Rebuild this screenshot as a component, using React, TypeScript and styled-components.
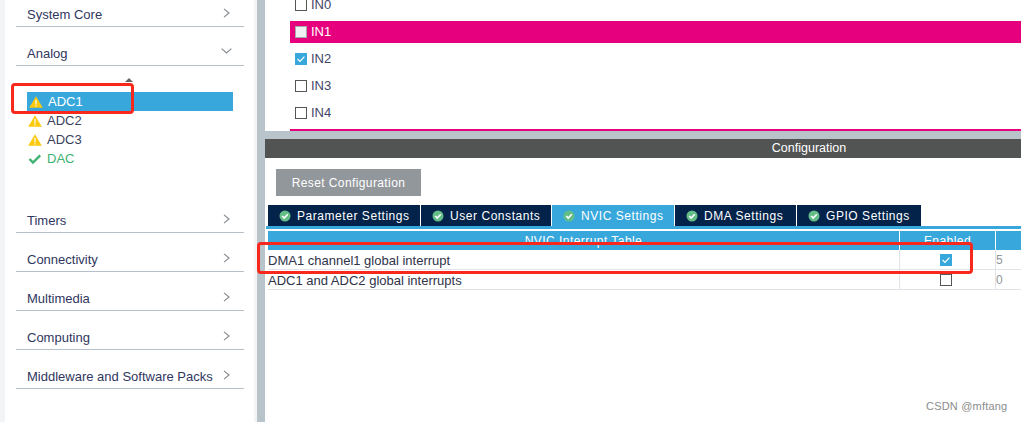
import React from "react";
import styled, { createGlobalStyle } from "styled-components";

const Global = createGlobalStyle`
  html, body { margin: 0; padding: 0; background: #fff; }
  body { font-family: "Liberation Sans", Arial, sans-serif; }
`;

const Page = styled.div`
  position: relative;
  width: 1021px;
  height: 422px;
  overflow: hidden;
  display: flex;
  background: #fff;
`;

const Sidebar = styled.aside`
  box-sizing: border-box;
  width: 257px;
  height: 422px;
  flex: none;
  background: #fff;
  border-left: 5px solid #f2f4f5;
  border-right: 3px solid #f2f4f5;
  padding: 0 10px 0 11px;
`;

const Category = styled.div<{ $h?: number }>`
  box-sizing: border-box;
  height: ${(p) => p.$h ?? 39}px;
  border-bottom: 1px solid #b5c0c8;
  display: flex;
  align-items: flex-end;
  justify-content: space-between;
  padding: 0 14px 3px 11px;
  font-size: 13px;
  line-height: 16px;
  color: #2f3660;
`;

const Chevron = styled.svg<{ $lift: number; $pull?: number }>`
  flex: none;
  margin-bottom: ${(p) => p.$lift}px;
  margin-right: ${(p) => p.$pull ?? 0}px;
  fill: none;
  stroke: #85898d;
  stroke-width: 1.1;
`;

const PeripheralList = styled.div`
  height: 128px;
  box-sizing: border-box;
  padding-top: 12px;
  display: flex;
  flex-direction: column;
`;

const ScrollCaret = styled.div`
  width: 0;
  height: 0;
  margin: 0 0 10px 109px;
  border-left: 4px solid transparent;
  border-right: 4px solid transparent;
  border-bottom: 4px solid #666;
`;

const Peripheral = styled.div<{ $active?: boolean; $ok?: boolean }>`
  box-sizing: border-box;
  width: 206px;
  height: 19px;
  margin-left: 11px;
  display: flex;
  align-items: center;
  gap: 5px;
  padding-left: ${(p) => (p.$active ? 2 : 1)}px;
  font-size: 13px;
  background: ${(p) => (p.$active ? "#38a8dc" : "transparent")};
  color: ${(p) => (p.$active ? "#fff" : p.$ok ? "#3eb273" : "#3a3f5c")};
`;

const Divider = styled.div`
  width: 8px;
  flex: none;
  background: #b9c4ca;
`;

const Main = styled.main`
  flex: 1;
  min-width: 0;
  display: flex;
  flex-direction: column;
`;

const ChannelPane = styled.section`
  box-sizing: border-box;
  height: 131px;
  margin-left: 25px;
  overflow: hidden;
  display: flex;
  flex-direction: column;
  justify-content: flex-end;
  padding-bottom: 3px;
  border-bottom: 2px solid #e6007e;
`;

const ChannelRow = styled.div<{ $active?: boolean }>`
  box-sizing: border-box;
  flex: none;
  height: ${(p) => (p.$active ? 22 : 27)}px;
  margin: ${(p) => (p.$active ? "3px 0 2px" : "0")};
  display: flex;
  align-items: center;
  gap: 4px;
  padding-left: 5px;
  padding-bottom: ${(p) => (p.$active ? 1 : 0)}px;
  font-size: 13px;
  background: ${(p) => (p.$active ? "#e6007e" : "transparent")};
  color: ${(p) => (p.$active ? "#fff" : "#3f4566")};
`;

const Box = styled.span<{ $state?: "off" | "on" | "muted" }>`
  box-sizing: border-box;
  width: 12px;
  height: 12px;
  flex: none;
  display: inline-flex;
  align-items: center;
  justify-content: center;
  border: 1px solid
    ${(p) =>
      p.$state === "on" ? "#38a8dc" : p.$state === "muted" ? "#a6a9ab" : "#555"};
  background: ${(p) =>
    p.$state === "on" ? "#38a8dc" : p.$state === "muted" ? "#eef0f2" : "#fff"};
`;

const Gutter = styled.div`
  height: 8px;
  flex: none;
  background: #b9c4ca;
`;

const TitleBar = styled.div`
  height: 19px;
  flex: none;
  background: #525453;
  color: #fff;
  font-size: 12.5px;
  line-height: 19px;
  text-align: center;
  padding-left: 332px;
`;

const ConfigBody = styled.section`
  flex: 1;
  padding: 11px 0 0 3px;
  display: flex;
  flex-direction: column;
`;

const ResetButton = styled.button`
  box-sizing: border-box;
  width: 145px;
  height: 27px;
  margin-left: 8px;
  border: 0;
  padding: 0;
  background: #92979c;
  color: #fff;
  font: 12px "Liberation Sans", Arial, sans-serif;
  letter-spacing: 0.4px;
`;

const Tabs = styled.div`
  display: flex;
  gap: 1px;
  margin-top: 9px;
  height: 21px;
`;

const Tab = styled.div<{ $active?: boolean; $w: number }>`
  box-sizing: border-box;
  width: ${(p) => p.$w}px;
  height: 21px;
  display: flex;
  align-items: center;
  gap: 6px;
  padding-left: 11px;
  font-size: 12px;
  letter-spacing: 0.55px;
  color: #fff;
  background: ${(p) => (p.$active ? "#38a8dc" : "#04234a")};
`;

const TabRule = styled.div`
  height: 3px;
  margin: 0 0 2px -2px;
  background: #38a8dc;
`;

const TableGrid = styled.div`
  display: grid;
  grid-template-columns: 631px 95px 1fr;
  column-gap: 1px;
`;

const HeadCell = styled.div`
  height: 19px;
  background: #38a8dc;
  color: #fff;
  font-size: 12px;
  line-height: 21px;
  text-align: center;
  letter-spacing: 0.45px;
`;

const NameCell = styled.div`
  box-sizing: border-box;
  height: 20px;
  border-bottom: 1px solid #e0e4e8;
  font-size: 13px;
  line-height: 21px;
  color: #2f3348;
`;

const EnabledCell = styled.div`
  box-sizing: border-box;
  height: 20px;
  border-bottom: 1px solid #e0e4e8;
  border-left: 1px solid #e0e4e8;
  margin-left: -1px;
  padding-right: 3px;
  display: flex;
  align-items: center;
  justify-content: center;
`;

const ValueCell = styled.div`
  box-sizing: border-box;
  height: 20px;
  border-bottom: 1px solid #e0e4e8;
  border-left: 1px solid #e0e4e8;
  margin-left: -1px;
  font-size: 12px;
  line-height: 21px;
  color: #8f979c;
`;

const Annotation = styled.div<{ $x: number; $y: number; $w: number; $h: number }>`
  position: absolute;
  box-sizing: border-box;
  left: ${(p) => p.$x}px;
  top: ${(p) => p.$y}px;
  width: ${(p) => p.$w}px;
  height: ${(p) => p.$h}px;
  border: 3px solid #f8281c;
  border-radius: 4px;
`;

const Watermark = styled.div`
  position: absolute;
  left: 926px;
  top: 399px;
  font-size: 11px;
  line-height: 14px;
  letter-spacing: 0.2px;
  color: #8c8c8c;
`;

const ChevronRight = () => (
  <Chevron $lift={5} width="7" height="10" viewBox="0 0 7 10">
    <polyline points="1,0.8 6,5 1,9.2" />
  </Chevron>
);

const ChevronDown = () => (
  <Chevron $lift={8} $pull={-2} width="11" height="6" viewBox="0 0 11 6">
    <polyline points="0.6,0.6 5.5,5 10.4,0.6" />
  </Chevron>
);

const Warn = () => (
  <svg width="14" height="12" viewBox="0 0 14 12">
    <path d="M7 0.3 L13.8 11.8 L0.2 11.8 Z" fill="#fdc90f" />
    <rect x="6.4" y="3.8" width="1.2" height="4.6" fill="#fff" />
    <rect x="6.4" y="9.2" width="1.2" height="1.3" fill="#fff" />
  </svg>
);

const Ok = () => (
  <svg width="14" height="12" viewBox="0 0 14 12">
    <polyline
      points="1.5,6 5,9.6 12.2,2.4"
      fill="none"
      stroke="#3eb273"
      strokeWidth="2.4"
    />
  </svg>
);

const Tick = () => (
  <svg width="10" height="10" viewBox="0 0 10 10">
    <polyline
      points="1.6,5 4,7.4 8.4,2.6"
      fill="none"
      stroke="#fff"
      strokeWidth="1.2"
    />
  </svg>
);

const TabIcon = () => (
  <svg width="12" height="12" viewBox="0 0 12 12" style={{ flex: "none" }}>
    <circle cx="6" cy="6" r="5.5" fill="#63bd87" />
    <polyline
      points="3.2,6 5.2,8 8.8,4.2"
      fill="none"
      stroke="#fff"
      strokeWidth="1.6"
    />
  </svg>
);

const categoriesAfter = [
  "Timers",
  "Connectivity",
  "Multimedia",
  "Computing",
  "Middleware and Software Packs",
];

const channels: { name: string; active?: boolean; state?: "off" | "on" | "muted" }[] = [
  { name: "IN0" },
  { name: "IN1", active: true, state: "muted" },
  { name: "IN2", state: "on" },
  { name: "IN3" },
  { name: "IN4" },
];

const tabs = [
  { name: "Parameter Settings", w: 152 },
  { name: "User Constants", w: 130 },
  { name: "NVIC Settings", w: 122, active: true },
  { name: "DMA Settings", w: 121 },
  { name: "GPIO Settings", w: 124 },
];

export default function App() {
  return (
    <>
      <Global />
      <Page>
        <Sidebar>
          <Category $h={27}>
            System Core
            <ChevronRight />
          </Category>
          <Category>
            Analog
            <ChevronDown />
          </Category>
          <PeripheralList>
            <ScrollCaret />
            <Peripheral $active>
              <Warn />
              ADC1
            </Peripheral>
            <Peripheral>
              <Warn />
              ADC2
            </Peripheral>
            <Peripheral>
              <Warn />
              ADC3
            </Peripheral>
            <Peripheral $ok>
              <Ok />
              DAC
            </Peripheral>
          </PeripheralList>
          {categoriesAfter.map((c) => (
            <Category key={c}>
              {c}
              <ChevronRight />
            </Category>
          ))}
        </Sidebar>
        <Divider />
        <Main>
          <ChannelPane>
            {channels.map((c) => (
              <ChannelRow key={c.name} $active={c.active}>
                <Box $state={c.state}>{c.state === "on" && <Tick />}</Box>
                {c.name}
              </ChannelRow>
            ))}
          </ChannelPane>
          <Gutter />
          <TitleBar>Configuration</TitleBar>
          <ConfigBody>
            <ResetButton>Reset Configuration</ResetButton>
            <Tabs>
              {tabs.map((t) => (
                <Tab key={t.name} $w={t.w} $active={t.active}>
                  <TabIcon />
                  {t.name}
                </Tab>
              ))}
            </Tabs>
            <TabRule />
            <TableGrid>
              <HeadCell>NVIC Interrupt Table</HeadCell>
              <HeadCell>Enabled</HeadCell>
              <HeadCell />
              <NameCell>DMA1 channel1 global interrupt</NameCell>
              <EnabledCell>
                <Box $state="on">
                  <Tick />
                </Box>
              </EnabledCell>
              <ValueCell>5</ValueCell>
              <NameCell>ADC1 and ADC2 global interrupts</NameCell>
              <EnabledCell>
                <Box />
              </EnabledCell>
              <ValueCell>0</ValueCell>
            </TableGrid>
          </ConfigBody>
        </Main>
        <Annotation $x={11} $y={83} $w={123} $h={31} />
        <Annotation $x={257} $y={242} $w={716} $h={32} />
        <Watermark>CSDN @mftang</Watermark>
      </Page>
    </>
  );
}
